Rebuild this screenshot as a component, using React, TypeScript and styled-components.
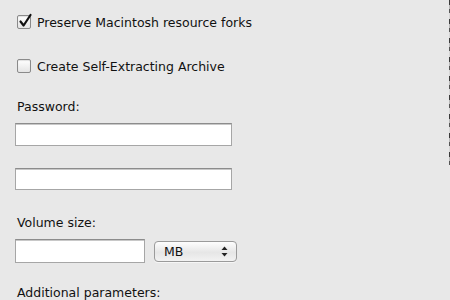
import styled, { createGlobalStyle } from 'styled-components';

const Global = createGlobalStyle`
  html, body {
    margin: 0;
    padding: 0;
    background: #e8e8e8;
  }
  body {
    width: 450px;
    height: 300px;
    overflow: hidden;
    font-family: "DejaVu Sans", "Liberation Sans", sans-serif;
    color: #111;
  }
`;

const Pane = styled.div`
  position: relative;
  width: 450px;
  height: 300px;
  box-sizing: border-box;
  padding: 15px 0 0 15px;
  display: flex;
  flex-direction: column;
`;

const Edge = styled.div`
  position: absolute;
  top: 0;
  right: 0;
  width: 1px;
  height: 165px;
  background: repeating-linear-gradient(to bottom, #3a3a3a 0 5px, #b8b8b8 5px 9px, #555 9px 13px, #d6d6d6 13px 19px);
`;

const CheckRow = styled.label<{ $gap: number }>`
  display: flex;
  align-items: center;
  gap: 6px;
  height: 14px;
  margin: 0 0 ${p => p.$gap}px 2px;
  font-size: 12.5px;
`;

const Box = styled.span`
  width: 12px;
  height: 12px;
  border: 1px solid #8a8a8a;
  border-radius: 2px;
  background: linear-gradient(#ffffff, #e4e4e4);
  box-shadow: inset 0 1px 1px rgba(0, 0, 0, 0.12);
  position: relative;
  flex: none;

  svg {
    position: absolute;
    left: 0;
    top: -3px;
  }
`;

const Label = styled.div<{ $gap: number }>`
  font-size: 12.5px;
  margin: 0 0 ${p => p.$gap}px 2px;
  height: 15px;
  line-height: 15px;
`;

const Field = styled.div<{ $w: number; $gap?: number }>`
  width: ${p => p.$w}px;
  height: 24px;
  box-sizing: border-box;
  background: #fff;
  border: 1px solid #a6a6a6;
  border-top-color: #8c8c8c;
  box-shadow: inset 0 1px 0 #c8c8c8;
  margin-bottom: ${p => p.$gap ?? 0}px;
`;

const Row = styled.div`
  display: flex;
  align-items: center;
  gap: 9px;
  margin-bottom: 22px;
`;

const Select = styled.div`
  width: 83px;
  height: 21px;
  box-sizing: border-box;
  border: 1px solid #9a9a9a;
  border-radius: 4px;
  background: linear-gradient(#fdfdfd, #e6e6e6 55%, #f2f2f2);
  box-shadow: 0 1px 0 rgba(255, 255, 255, 0.6);
  display: flex;
  align-items: center;
  justify-content: space-between;
  padding: 0 8px 0 9px;
  font-size: 12.5px;
`;

const Check = () => (
  <svg width="15" height="15" viewBox="0 0 15 15">
    <path d="M2.5 8.5 L5.6 12.5 L12.5 2" fill="none" stroke="#111" strokeWidth="2.2" strokeLinecap="round" strokeLinejoin="round" />
  </svg>
);

const Arrows = () => (
  <svg width="7" height="11" viewBox="0 0 7 11">
    <path d="M3.5 0.5 L6.5 4 H0.5 Z" fill="#222" />
    <path d="M3.5 10.5 L6.5 7 H0.5 Z" fill="#222" />
  </svg>
);

export default function App() {
  return (
    <Pane>
      <Global />
      <Edge />
      <CheckRow $gap={30}>
        <Box><Check /></Box>
        Preserve Macintosh resource forks
      </CheckRow>
      <CheckRow $gap={26}>
        <Box />
        Create Self-Extracting Archive
      </CheckRow>
      <Label $gap={9}>Password:</Label>
      <Field $w={217} $gap={22} />
      <Field $w={217} $gap={25} />
      <Label $gap={9}>Volume size:</Label>
      <Row>
        <Field $w={130} />
        <Select>
          <span>MB</span>
          <Arrows />
        </Select>
      </Row>
      <Label $gap={0}>Additional parameters:</Label>
    </Pane>
  );
}
